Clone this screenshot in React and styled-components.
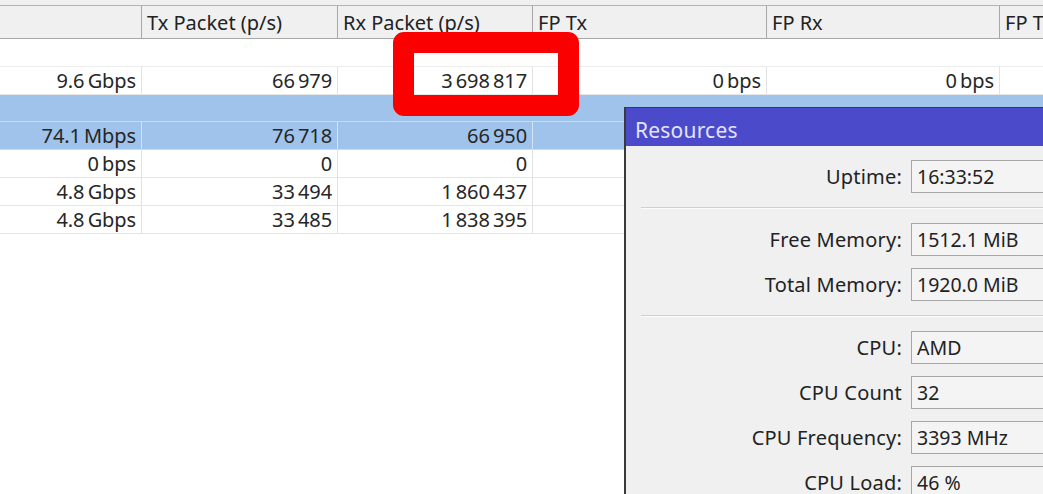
import React from 'react';
import styled, { createGlobalStyle } from 'styled-components';

const GlobalStyle = createGlobalStyle`
  html, body {
    margin: 0;
    padding: 0;
    background: #ffffff;
  }

  body {
    font-family: 'Noto Sans', 'Open Sans', Arial, sans-serif;
    color: #1e1e1e;
  }
`;

const COLUMNS = '142px 196px 195px 234px 233px 220px';

const Screen = styled.div`
  position: relative;
  width: 1043px;
  height: 494px;
  overflow: hidden;
  background: #ffffff;
`;

const TopStrip = styled.div`
  height: 5px;
  background: #f0f0f0;
  border-bottom: 1px solid #b4b4b4;
`;

const Table = styled.div`
  display: flex;
  flex-direction: column;
  width: 1220px;
`;

const HeaderRow = styled.div`
  display: grid;
  grid-template-columns: ${COLUMNS};
  height: 32px;
  background: #f0f0f0;
  border-bottom: 1px solid #a8a8a8;
`;

const HeaderCell = styled.div`
  display: flex;
  align-items: center;
  padding-left: 5px;
  border-right: 1px solid #a8a8a8;
  font-size: 20px;
  color: #222;
  white-space: nowrap;
  overflow: hidden;
`;

const GroupRow = styled.div`
  height: ${(p) => p.$height || 27}px;
  background: ${(p) => (p.$selected ? '#9fc3eb' : '#ffffff')};
  border-bottom: 1px solid ${(p) => (p.$selected ? '#c6dcf4' : '#ececec')};
`;

const DataRow = styled.div`
  display: grid;
  grid-template-columns: ${COLUMNS};
  height: 27px;
  background: ${(p) => (p.$selected ? '#9fc3eb' : '#ffffff')};
  border-bottom: 1px solid ${(p) => (p.$selected ? '#c6dcf4' : '#e6e6e6')};
`;

const Cell = styled.div`
  display: flex;
  align-items: center;
  justify-content: flex-end;
  padding-right: 5px;
  border-right: 1px solid ${(p) => (p.$selected ? '#d4e4f6' : '#e2e2e2')};
  font-size: 20px;
  letter-spacing: -0.1px;
  color: #262626;
  white-space: nowrap;
`;

const Highlight = styled.div`
  position: absolute;
  left: 393px;
  top: 32px;
  width: 186px;
  height: 84px;
  box-sizing: border-box;
  border: 21px solid #fb0000;
  border-radius: 11px;
`;

const Window = styled.div`
  position: absolute;
  left: 624px;
  top: 107px;
  width: 440px;
  height: 420px;
  background: #f0f0f0;
  border: 1px solid #3a3a3a;
  border-width: 1px 1px 1px 2px;
`;

const TitleBar = styled.div`
  display: flex;
  align-items: center;
  box-sizing: border-box;
  height: 38px;
  padding: 5px 0 0 9px;
  background: #4a4acb;
  color: #e4e4fa;
  font-size: 21px;
  letter-spacing: 0.2px;
`;

const Fields = styled.div`
  display: grid;
  grid-template-columns: 276px 1fr;
  column-gap: 9px;
  row-gap: 12px;
  padding-top: 14px;
  align-items: center;
`;

const Label = styled.div`
  text-align: right;
  font-size: 20px;
  letter-spacing: 0.2px;
  color: #222;
  white-space: nowrap;
`;

const Value = styled.div`
  display: flex;
  align-items: center;
  height: 31px;
  padding-left: 5px;
  background: #f4f4f4;
  border: 1px solid #a6a6a6;
  border-right: none;
  font-size: 19.5px;
  color: #222;
  white-space: nowrap;
`;

const Divider = styled.div`
  grid-column: 1 / -1;
  margin: 2px 0 2px 15px;
  height: 1px;
  background: #d0d0d0;
  border-bottom: 1px solid #fbfbfb;
`;

// thousands groups are split by a thin space
const n = (s) => s.replace(/ /g, '\u2009');

const columns = ['', 'Tx Packet (p/s)', 'Rx Packet (p/s)', 'FP Tx', 'FP Rx', 'FP Tx Packet (p/s)'];

const rows = [
  { group: true, selected: false, height: 27 },
  { cells: ['9.6 Gbps', '66 979', '3 698 817', '0 bps', '0 bps', ''] },
  { group: true, selected: true, height: 26 },
  { selected: true, cells: ['74.1 Mbps', '76 718', '66 950', '', '', ''] },
  { cells: ['0 bps', '0', '0', '', '', ''] },
  { cells: ['4.8 Gbps', '33 494', '1 860 437', '', '', ''] },
  { cells: ['4.8 Gbps', '33 485', '1 838 395', '', '', ''] },
];

const resources = [
  ['Uptime:', '16:33:52'],
  null,
  ['Free Memory:', '1512.1 MiB'],
  ['Total Memory:', '1920.0 MiB'],
  null,
  ['CPU:', 'AMD'],
  ['CPU Count', '32'],
  ['CPU Frequency:', '3393 MHz'],
  ['CPU Load:', '46 %'],
];

export default function App() {
  return (
    <Screen>
      <GlobalStyle />
      <TopStrip />
      <Table>
        <HeaderRow>
          {columns.map((c, i) => (
            <HeaderCell key={i}>{c}</HeaderCell>
          ))}
        </HeaderRow>
        {rows.map((r, i) =>
          r.group ? (
            <GroupRow key={i} $selected={r.selected} $height={r.height} />
          ) : (
            <DataRow key={i} $selected={r.selected}>
              {r.cells.map((c, j) => (
                <Cell key={j} $selected={r.selected}>
                  {n(c)}
                </Cell>
              ))}
            </DataRow>
          )
        )}
      </Table>

      <Highlight />

      <Window>
        <TitleBar>Resources</TitleBar>
        <Fields>
          {resources.map((f, i) =>
            f ? (
              <React.Fragment key={i}>
                <Label>{f[0]}</Label>
                <Value>{f[1]}</Value>
              </React.Fragment>
            ) : (
              <Divider key={i} />
            )
          )}
        </Fields>
      </Window>
    </Screen>
  );
}
